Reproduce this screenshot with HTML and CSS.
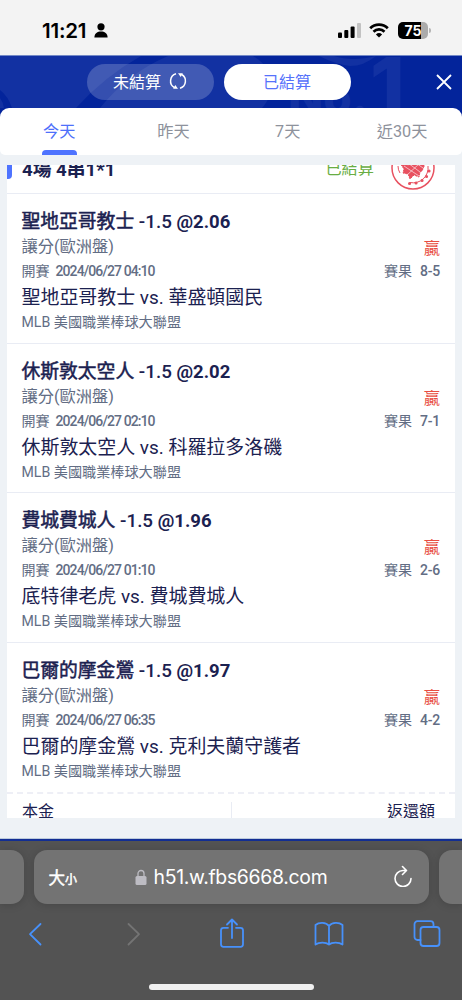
FILE: index.html
```
<!DOCTYPE html>
<html lang="zh-Hant">
<head>
<meta charset="utf-8">
<meta name="viewport" content="width=device-width">
<title>已結算</title>
<link rel="stylesheet" href="styles.css">
</head>
<body>
<div class="status">
  <span class="clock">11:21</span>
  <svg class="person" width="14" height="15" viewBox="0 0 14 15"><circle cx="7" cy="3.800" r="3.600"/><path d="M.4 14.400C.4 10.500 3.500 8.600 7 8.600s6.600 1.900 6.600 5.800Z"/></svg>
  <svg class="signal" width="24" height="16" viewBox="0 0 24 16"><rect x="0" y="9.500" width="4" height="5.500" rx="1"/><rect x="6.300" y="7" width="4" height="8" rx="1"/><rect x="12.600" y="3.500" width="4" height="11.500" rx="1"/><rect x="19" y="0" width="4" height="15" rx="1" fill="#c2c2c2"/></svg>
  <svg class="wifi" width="20" height="15" viewBox="0 0 20 15"><path d="M1.200 5.200a12.400 12.400 0 0 1 17.600 0M4.500 8.700a7.800 7.800 0 0 1 11 0" fill="none" stroke="#000" stroke-width="2.700"/><path d="M10 14.500 6.900 11.400a4.500 4.500 0 0 1 6.200 0Z"/></svg>
  <span class="battery"><span>75</span></span><i class="nub"></i>
</div>
<header class="top">
  <svg class="pattern" width="462" height="52" viewBox="0 0 462 52" fill="#1231a2"><path d="M0 0H141Q105 20 76 52H12Q8 40 0 34Z"/><path d="M0 42Q3 46 4 52H0Z"/><path d="M168 0H253C276 14 277 35 262 52H100Q128 17 168 0Z"/><path d="M319 0H334Q352 6 376 0Q364 10 350 10Q335 8 319 0Z"/><text x="288" y="58" class="no">No.</text><text x="370" y="58" class="one">1</text></svg>
  <div class="pill">未結算
    <svg width="18" height="18" viewBox="0 0 18 18" fill="none" stroke="#fff" stroke-width="1.500"><path d="M7 1.800A7.500 7.500 0 0 0 5.300 15.500M11 16.200A7.500 7.500 0 0 0 12.700 2.500"/><path d="m4.200 16.700 4.800.1-2.700-3.800ZM13.800 1.300 9 1.200l2.700 3.800Z" fill="#fff" stroke="none"/></svg>
  </div>
  <div class="pill on">已結算</div>
  <svg class="close" width="16" height="16" viewBox="0 0 16 16"><path d="m1 1 14 14M15 1 1 15" fill="none" stroke="#fff" stroke-width="1.800"/></svg>
</header>
<main class="page">
  <nav class="tabs"><span class="tab active">今天</span><span class="tab">昨天</span><span class="tab">7天</span><span class="tab">近30天</span></nav>
  <div class="scroll">
    <section class="card">
      <div class="head"><b>4場 4串1*1</b><span class="done">已結算</span>
        <svg class="stamp" width="44" height="44" viewBox="0 0 44 44" fill="none" stroke="#e85160"><circle cx="22" cy="22" r="21" stroke-width="1.500"/><path d="M37 20A15 15 0 0 1 19 36.500M7 20q0 4 2 7"/><path d="m9 17 5-1 3 4 5-9 5 8 7-1-3 7-2 1-1 5-5-2-4 4-2-5-5-1 1-4Z" fill="#e85160" stroke-dasharray="2 1"/><path d="m13 20 15 10M17 17l12 9M22 15l10 7M15 30 29 17" stroke="#fff" stroke-width=".6"/><path d="M18.500 37.500h.1M25 37h.1M31 34.500h.1M35.500 30.500h.1M38 25h.1" stroke-width="3" stroke-linecap="round"/></svg>
      </div>
      <article class="bet"><h2>聖地亞哥教士 <span>-1.5</span> <b>@2.06</b></h2><div class="line market"><span>讓分(歐洲盤)</span><em>贏</em></div><div class="line small"><span>開賽<i class="date">2024/06/27 04:10</i></span><span>賽果<i class="score">8-5</i></span></div><div class="match">聖地亞哥教士 vs. 華盛頓國民</div><div class="league">MLB 美國職業棒球大聯盟</div></article>
      <article class="bet"><h2>休斯敦太空人 <span>-1.5</span> <b>@2.02</b></h2><div class="line market"><span>讓分(歐洲盤)</span><em>贏</em></div><div class="line small"><span>開賽<i class="date">2024/06/27 02:10</i></span><span>賽果<i class="score">7-1</i></span></div><div class="match">休斯敦太空人 vs. 科羅拉多洛磯</div><div class="league">MLB 美國職業棒球大聯盟</div></article>
      <article class="bet"><h2>費城費城人 <span>-1.5</span> <b>@1.96</b></h2><div class="line market"><span>讓分(歐洲盤)</span><em>贏</em></div><div class="line small"><span>開賽<i class="date">2024/06/27 01:10</i></span><span>賽果<i class="score">2-6</i></span></div><div class="match">底特律老虎 vs. 費城費城人</div><div class="league">MLB 美國職業棒球大聯盟</div></article>
      <article class="bet"><h2>巴爾的摩金鶯 <span>-1.5</span> <b>@1.97</b></h2><div class="line market"><span>讓分(歐洲盤)</span><em>贏</em></div><div class="line small"><span>開賽<i class="date">2024/06/27 06:35</i></span><span>賽果<i class="score">4-2</i></span></div><div class="match">巴爾的摩金鶯 vs. 克利夫蘭守護者</div><div class="league">MLB 美國職業棒球大聯盟</div></article>
      <div class="totals"><span>本金</span><span>返還額</span></div>
    </section>
  </div>
</main>
<footer class="browser">
  <div class="addresses">
    <div class="side"></div>
    <div class="address">
      <span class="size">大<small>小</small></span>
      <span class="url"><svg width="12" height="16" viewBox="0 0 12 16"><rect x=".5" y="7" width="11" height="9" rx="1.500" fill="#bdbcc3"/><path d="M3 8V4.500a3 3 0 0 1 6 0V8" fill="none" stroke="#bdbcc3" stroke-width="1.300"/></svg>h51.w.fbs6668.com</span>
      <svg class="reload" width="20" height="22" viewBox="0 0 20 22" fill="none" stroke="#fff" stroke-width="1.600" stroke-linecap="round" stroke-linejoin="round"><path d="M13 5.500H10A8 8 0 1 0 18 13.500M9.500 1.500l4 4-4 4"/></svg>
    </div>
    <div class="side"></div>
  </div>
  <div class="tools">
    <svg width="14" height="30" viewBox="0 0 14 30"><path d="M12.500 6 2 16.200 12.500 26.500"/></svg>
    <svg class="off" width="14" height="30" viewBox="0 0 14 30"><path d="m1.500 6 10.500 10.200L1.500 26.500"/></svg>
    <svg width="26" height="30" viewBox="0 0 26 30"><path d="M9 9.800H4.500a2.500 2.500 0 0 0-2.500 2.500v14a2.500 2.500 0 0 0 2.500 2.500h17a2.500 2.500 0 0 0 2.500-2.500v-14a2.500 2.500 0 0 0-2.500-2.500H17M13 20V1.500M8 6.500l5-5 5 5"/></svg>
    <svg width="30" height="30" viewBox="0 0 30 30"><path d="M15 8C12 4 5 4 1.500 7V26.500C5 24 12 24 15 26.500 18 24 25 24 28.500 26.500V7C25 4 18 4 15 8V26.500"/></svg>
    <svg width="28" height="30" viewBox="0 0 28 30"><rect x="7.500" y="9" width="19" height="19" rx="3"/><path d="M7.500 22H4.500a3 3 0 0 1-3-3V6.200a3 3 0 0 1 3-3h13a3 3 0 0 1 3 3V9"/></svg>
  </div>
  <div class="home"></div>
</footer>
</body>
</html>
```
FILE: styles.css
```
* { box-sizing: border-box; }
body { margin: 0; width: 462px; height: 1000px; overflow: hidden; display: flex; flex-direction: column; background: #03249b; font-family: Roboto, "Noto Sans CJK TC", sans-serif; color: #1b2150; }
i, em { font-style: normal; }
svg { flex: none; display: block; }
.status { height: 55px; flex: none; background: #f3f3f3; display: flex; align-items: center; padding: 6px 31px 0 42px; }
.clock { width: 47px; font: 600 20.500px Inter, sans-serif; letter-spacing: -.2px; color: #000; white-space: nowrap; }
.person { margin-left: 5px; }
.signal { margin-left: auto; }
.wifi { margin: 0 9px 0 7px; }
.battery { width: 30px; height: 17px; border-radius: 5px; background: linear-gradient(90deg, #000 0 23px, #ababab 23px); color: #fff; font: 700 14px/17px Inter, sans-serif; text-align: center; }
.nub { width: 2px; height: 5px; border-radius: 0 2px 2px 0; background: #b4b4b4; margin-left: 1px; }
.top { position: relative; height: 53px; flex: none; display: flex; align-items: center; padding: 0 10px 1px 87px; gap: 10px; border-top: 1px solid #7389c6; }
.pattern { position: absolute; left: 0; top: 0; overflow: hidden; }
.no, .one { font-family: Inter, sans-serif; font-weight: 800; }
.no { font-size: 46px; }
.one { font-size: 79px; }
.pill { position: relative; width: 127px; height: 36px; border-radius: 18px; background: rgba(255, 255, 255, .2); color: #fff; display: flex; align-items: center; justify-content: center; gap: 8px; font-size: 16px; padding: 0 1px 2px 0; }
.pill svg { margin-top: 1px; }
.pill.on { background: #fff; color: #5672fb; }
.close { position: relative; margin-left: auto; }
.page { height: 731px; flex: none; background: linear-gradient(#03249b 0 10px, #eef2f6 10px); border-bottom: 1px solid #bccbdc; }
.tabs { height: 47px; border-radius: 9px 9px 5px 5px; background: #fff; display: grid; grid-template-columns: repeat(4, 114.300px); padding: 0 2px; font-size: 16.200px; color: #8e929c; }
.tab { display: flex; align-items: center; justify-content: center; position: relative; padding-bottom: 3px; }
.tab.active { color: #4e70fb; }
.tab.active::after { content: ""; position: absolute; bottom: 0; left: 40px; width: 35px; height: 5px; border-radius: 4px 4px 0 0; background: #4e73ff; }
.scroll { height: 653px; margin: 10px 7px 0; overflow: hidden; background: #fff; }
.card { margin-top: -21px; }
.head { height: 50px; padding: 0 20px 3px 15px; display: flex; align-items: center; border-bottom: 1px solid #e9ecf4; position: relative; }
.head b { font-size: 18.700px; }
.head::before { content: ""; position: absolute; left: 0; top: 15px; width: 5px; height: 20px; background: #4e73ff; border-radius: 0 4px 4px 0; }
.done { margin-left: auto; margin-right: 17px; color: #68ad43; font-size: 16.200px; }
.stamp { margin-top: 1px; }
.bet { height: 149.700px; padding: 15px 15px 0 14.500px; border-bottom: 1.500px solid #e9ecf4; }
.bet:nth-of-type(4) { border-bottom: 0; height: 148.700px; }
h2 { margin: 0; height: 25px; line-height: 27px; font-size: 18.800px; font-weight: 400; white-space: nowrap; -webkit-text-stroke: .5px; }
h2 span { font-weight: 500; }
h2 span, h2 b { -webkit-text-stroke: 0; }
h2 b { font-size: 18.500px; }
.line { display: flex; justify-content: space-between; height: 25px; line-height: 25px; color: #626d84; }
.market { font-size: 16.250px; }
.market em { color: #e84d43; padding-top: 2px; }
.small { font-size: 14px; }
.date, .score { font-weight: 500; font-size: 14px; }
.date { margin-left: 6px; letter-spacing: -.9px; }
.score { margin-left: 8px; letter-spacing: -.2px; }
.match { height: 26px; line-height: 27px; font-size: 18.950px; white-space: nowrap; }
.league { height: 25px; line-height: 25px; font-size: 14.150px; color: #626d84; }
.totals { height: 50px; border-top: 2px dashed #eeeff6; padding: 7px 20px 0 15px; display: flex; justify-content: space-between; font-size: 16px; line-height: 22px; background: linear-gradient(#e9ecf4, #e9ecf4) 224px 8px / 1px 40px no-repeat; }
.browser { flex: 1; border-top: 2px solid #122e93; background: #535353; display: flex; flex-direction: column; }
.addresses { display: flex; gap: 10px; margin-top: 9px; }
.side { width: 24px; height: 54px; flex: none; background: #737373; border-radius: 0 13px 13px 0; box-shadow: 0 1px 8px rgba(0, 0, 0, .16); }
.side:last-child { border-radius: 13px 0 0 13px; }
.address { width: 395px; height: 54px; flex: none; border-radius: 13px; background: #737373; display: flex; align-items: center; padding: 0 16px 0 14.500px; color: #fff; box-shadow: 0 1px 8px rgba(0, 0, 0, .16); }
.size { width: 86px; font-size: 16.500px; font-weight: 400; -webkit-text-stroke: .5px; }
.size small { font-size: 12px; }
.url { display: flex; align-items: center; gap: 7px; font: 19.400px Inter, sans-serif; letter-spacing: -.3px; white-space: nowrap; }
.reload { margin-left: auto; margin-top: -3px; }
.tools { display: grid; grid-template-columns: 98px 99px 97px 98px 98px; justify-items: center; margin: 14px 0 0 -14px; fill: none; stroke: #4791fb; stroke-width: 1.800; stroke-linecap: round; stroke-linejoin: round; }
.off { margin-left: 1px; stroke: #747474; }
.home { width: 165px; height: 6px; border-radius: 3px; background: #f0f0f0; margin: 36px auto 0 149px; }
```
